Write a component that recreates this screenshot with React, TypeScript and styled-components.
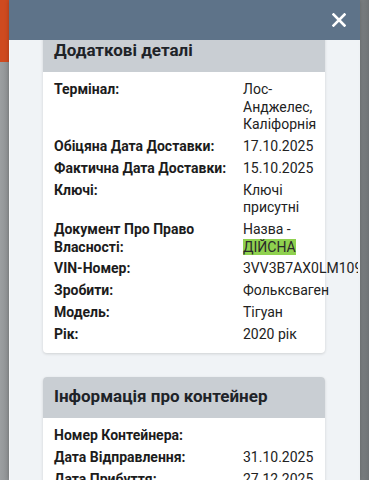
import React from 'react';
import styled, { createGlobalStyle } from 'styled-components';

const GlobalStyle = createGlobalStyle`
  html, body {
    margin: 0;
    padding: 0;
    height: 100%;
    overflow: hidden;
  }
  body {
    font-family: Roboto, 'Noto Sans', Arial, sans-serif;
  }
`;

type Row = { label: string; value: React.ReactNode };

const Page = styled.div`
  position: relative;
  width: 369px;
  height: 480px;
  overflow: hidden;
  background: linear-gradient(to right, #9c9fa1 0px, #8f9294 8px, #7d8183 360px, #6f7375 369px);
`;

const SiteHeader = styled.div`
  height: 62px;
  width: 9px;
  background: #cf4a1f;
`;

const Modal = styled.div`
  position: absolute;
  top: 0;
  left: 9px;
  width: 351px;
  height: 480px;
  background: #eff2f5;
  box-shadow: 0 0 4px rgba(0, 0, 0, 0.25);
  display: flex;
  flex-direction: column;
`;

const ModalHeader = styled.div`
  height: 40px;
  flex-shrink: 0;
  background: #5e7389;
  display: flex;
  align-items: center;
  justify-content: flex-end;
  padding-right: 14px;
  box-sizing: border-box;
`;

const CloseButton = styled.button`
  border: none;
  background: none;
  padding: 0;
  width: 14px;
  height: 14px;
  display: flex;
`;

const ModalBody = styled.div`
  flex: 1;
  overflow: hidden;
  margin-right: 2px;
  background: #f0f3f6;
  border-left: 1px solid #f6f8fa;
`;

const Content = styled.div`
  margin-top: -9px;
  padding: 0 33px;
  display: flex;
  flex-direction: column;
  gap: 24px;
`;

const Card = styled.section`
  width: 282px;
  background: #ffffff;
  border-radius: 4px;
  box-shadow: 0 1px 3px rgba(0, 0, 0, 0.14);
`;

const CardTitle = styled.h2`
  margin: 0;
  height: 41px;
  box-sizing: border-box;
  padding: 0 11px 3px;
  display: flex;
  align-items: center;
  background: #c9ced3;
  border-radius: 4px 4px 0 0;
  font-size: 17px;
  font-weight: 700;
  color: #1e2328;
`;

const CardBody = styled.div`
  padding: 9px 8px 10px 11px;
  display: flex;
  flex-direction: column;
  gap: 4.2px;
`;

const InfoRow = styled.div`
  display: grid;
  grid-template-columns: 189px 74px;
  font-size: 14px;
  line-height: 17.6px;
  color: #1c1c1c;
`;

const Label = styled.div`
  font-weight: 700;
  padding-right: 8px;
`;

const Value = styled.div`
  font-weight: 400;
  color: #222222;
`;

const Highlight = styled.span`
  background: #8fd14f;
  color: #2a2a2a;
`;

const DETAILS: Row[] = [
  { label: 'Термінал:', value: 'Лос-Анджелес, Каліфорнія' },
  { label: 'Обіцяна Дата Доставки:', value: '17.10.2025' },
  { label: 'Фактична Дата Доставки:', value: '15.10.2025' },
  { label: 'Ключі:', value: 'Ключі присутні' },
  {
    label: 'Документ Про Право Власності:',
    value: (
      <>
        Назва - <Highlight>ДІЙСНА</Highlight>
      </>
    ),
  },
  { label: 'VIN-Номер:', value: '3VV3B7AX0LM109846' },
  { label: 'Зробити:', value: 'Фольксваген' },
  { label: 'Модель:', value: 'Тігуан' },
  { label: 'Рік:', value: '2020 рік' },
];

const CONTAINER: Row[] = [
  { label: 'Номер Контейнера:', value: '' },
  { label: 'Дата Відправлення:', value: '31.10.2025' },
  { label: 'Дата Прибуття:', value: '27.12.2025' },
];

const InfoCard: React.FC<{ title: string; rows: Row[] }> = ({ title, rows }) => (
  <Card>
    <CardTitle>{title}</CardTitle>
    <CardBody>
      {rows.map((row) => (
        <InfoRow key={row.label}>
          <Label>{row.label}</Label>
          <Value>{row.value}</Value>
        </InfoRow>
      ))}
    </CardBody>
  </Card>
);

const App: React.FC = () => {
  return (
    <Page>
      <GlobalStyle />
      <SiteHeader />
      <Modal>
        <ModalHeader>
          <CloseButton aria-label="close">
            <svg width="14" height="14" viewBox="0 0 14 14">
              <path
                d="M1.5 1.5 L12.5 12.5 M12.5 1.5 L1.5 12.5"
                stroke="#ffffff"
                strokeWidth="2.6"
                strokeLinecap="square"
              />
            </svg>
          </CloseButton>
        </ModalHeader>
        <ModalBody>
          <Content>
            <InfoCard title="Додаткові деталі" rows={DETAILS} />
            <InfoCard title="Інформація про контейнер" rows={CONTAINER} />
          </Content>
        </ModalBody>
      </Modal>
    </Page>
  );
};

export default App;
